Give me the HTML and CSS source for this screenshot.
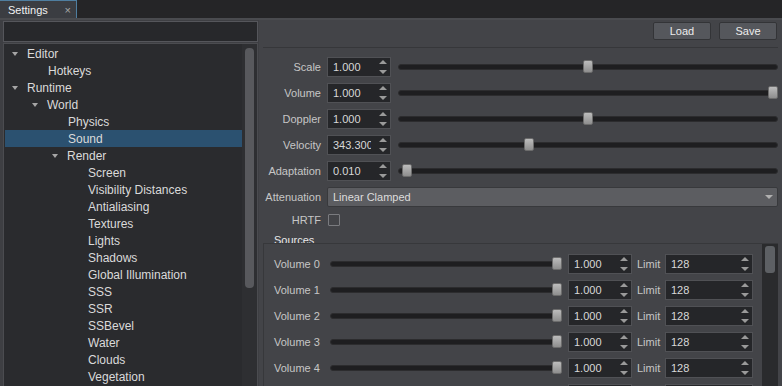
FILE: index.html
```html
<!DOCTYPE html>
<html lang="en">
<head>
    <meta charset="UTF-8">
    <title>Settings</title>
    <link rel="stylesheet" href="styles.css">
</head>
<body>
    <div class="tabbar">
        <div class="tab"><span>Settings</span><span class="tab-close">×</span></div>
    </div>

    <div class="main">
        <div class="left">
            <div class="search"></div>
            <div class="tree">
                <div class="tree-items">
                    <div class="item lvl0"><span class="arrow"></span>Editor</div>
                    <div class="item lvl1 leaf">Hotkeys</div>
                    <div class="item lvl0"><span class="arrow"></span>Runtime</div>
                    <div class="item lvl1"><span class="arrow"></span>World</div>
                    <div class="item lvl2 leaf">Physics</div>
                    <div class="item lvl2 leaf selected">Sound</div>
                    <div class="item lvl2"><span class="arrow"></span>Render</div>
                    <div class="item lvl3 leaf">Screen</div>
                    <div class="item lvl3 leaf">Visibility Distances</div>
                    <div class="item lvl3 leaf">Antialiasing</div>
                    <div class="item lvl3 leaf">Textures</div>
                    <div class="item lvl3 leaf">Lights</div>
                    <div class="item lvl3 leaf">Shadows</div>
                    <div class="item lvl3 leaf">Global Illumination</div>
                    <div class="item lvl3 leaf">SSS</div>
                    <div class="item lvl3 leaf">SSR</div>
                    <div class="item lvl3 leaf">SSBevel</div>
                    <div class="item lvl3 leaf">Water</div>
                    <div class="item lvl3 leaf">Clouds</div>
                    <div class="item lvl3 leaf">Vegetation</div>
                </div>
                <div class="tree-scroll"><div class="tree-thumb"></div></div>
            </div>
        </div>

        <div class="right">
            <div class="toolbar">
                <button class="btn">Load</button>
                <button class="btn">Save</button>
            </div>

            <div class="form">
                <label>Scale</label>
                <div class="field">
                    <div class="spin"><span class="spin-value">1.000</span><svg class="spin-arrows" viewBox="0 0 8 14"><polygon points="0,4 4,0 8,4"/><polygon points="0,10 8,10 4,14"/></svg></div>
                    <div class="slider"><div class="groove"></div><div class="handle" style="left: calc((100% - 10px) * 0.5)"></div></div>
                </div>

                <label>Volume</label>
                <div class="field">
                    <div class="spin"><span class="spin-value">1.000</span><svg class="spin-arrows" viewBox="0 0 8 14"><polygon points="0,4 4,0 8,4"/><polygon points="0,10 8,10 4,14"/></svg></div>
                    <div class="slider"><div class="groove"></div><div class="handle" style="left: calc((100% - 10px) * 1)"></div></div>
                </div>

                <label>Doppler</label>
                <div class="field">
                    <div class="spin"><span class="spin-value">1.000</span><svg class="spin-arrows" viewBox="0 0 8 14"><polygon points="0,4 4,0 8,4"/><polygon points="0,10 8,10 4,14"/></svg></div>
                    <div class="slider"><div class="groove"></div><div class="handle" style="left: calc((100% - 10px) * 0.5)"></div></div>
                </div>

                <label>Velocity</label>
                <div class="field">
                    <div class="spin"><span class="spin-value">343.300</span><svg class="spin-arrows" viewBox="0 0 8 14"><polygon points="0,4 4,0 8,4"/><polygon points="0,10 8,10 4,14"/></svg></div>
                    <div class="slider"><div class="groove"></div><div class="handle" style="left: calc((100% - 10px) * 0.34)"></div></div>
                </div>

                <label>Adaptation</label>
                <div class="field">
                    <div class="spin"><span class="spin-value">0.010</span><svg class="spin-arrows" viewBox="0 0 8 14"><polygon points="0,4 4,0 8,4"/><polygon points="0,10 8,10 4,14"/></svg></div>
                    <div class="slider"><div class="groove"></div><div class="handle" style="left: calc((100% - 10px) * 0.01)"></div></div>
                </div>

                <label>Attenuation</label>
                <div class="combo">
                    <span>Linear Clamped</span>
                    <svg class="combo-arrow" viewBox="0 0 8 4"><polygon points="0,0 8,0 4,4"/></svg>
                </div>

                <label>HRTF</label>
                <div class="field-check"><div class="check"></div></div>
            </div>

            <div class="group-title">Sources</div>
            <div class="group">
                <div class="sources">
                    <div class="source-row">
                        <label>Volume 0</label>
                        <div class="slider"><div class="groove"></div><div class="handle" style="left: calc((100% - 10px) * 1)"></div></div>
                        <div class="spin"><span class="spin-value">1.000</span><svg class="spin-arrows" viewBox="0 0 8 14"><polygon points="0,4 4,0 8,4"/><polygon points="0,10 8,10 4,14"/></svg></div>
                        <span class="limit">Limit</span>
                        <div class="spin spin-wide"><span class="spin-value">128</span><svg class="spin-arrows" viewBox="0 0 8 14"><polygon points="0,4 4,0 8,4"/><polygon points="0,10 8,10 4,14"/></svg></div>
                    </div>
                    <div class="source-row">
                        <label>Volume 1</label>
                        <div class="slider"><div class="groove"></div><div class="handle" style="left: calc((100% - 10px) * 1)"></div></div>
                        <div class="spin"><span class="spin-value">1.000</span><svg class="spin-arrows" viewBox="0 0 8 14"><polygon points="0,4 4,0 8,4"/><polygon points="0,10 8,10 4,14"/></svg></div>
                        <span class="limit">Limit</span>
                        <div class="spin spin-wide"><span class="spin-value">128</span><svg class="spin-arrows" viewBox="0 0 8 14"><polygon points="0,4 4,0 8,4"/><polygon points="0,10 8,10 4,14"/></svg></div>
                    </div>
                    <div class="source-row">
                        <label>Volume 2</label>
                        <div class="slider"><div class="groove"></div><div class="handle" style="left: calc((100% - 10px) * 1)"></div></div>
                        <div class="spin"><span class="spin-value">1.000</span><svg class="spin-arrows" viewBox="0 0 8 14"><polygon points="0,4 4,0 8,4"/><polygon points="0,10 8,10 4,14"/></svg></div>
                        <span class="limit">Limit</span>
                        <div class="spin spin-wide"><span class="spin-value">128</span><svg class="spin-arrows" viewBox="0 0 8 14"><polygon points="0,4 4,0 8,4"/><polygon points="0,10 8,10 4,14"/></svg></div>
                    </div>
                    <div class="source-row">
                        <label>Volume 3</label>
                        <div class="slider"><div class="groove"></div><div class="handle" style="left: calc((100% - 10px) * 1)"></div></div>
                        <div class="spin"><span class="spin-value">1.000</span><svg class="spin-arrows" viewBox="0 0 8 14"><polygon points="0,4 4,0 8,4"/><polygon points="0,10 8,10 4,14"/></svg></div>
                        <span class="limit">Limit</span>
                        <div class="spin spin-wide"><span class="spin-value">128</span><svg class="spin-arrows" viewBox="0 0 8 14"><polygon points="0,4 4,0 8,4"/><polygon points="0,10 8,10 4,14"/></svg></div>
                    </div>
                    <div class="source-row">
                        <label>Volume 4</label>
                        <div class="slider"><div class="groove"></div><div class="handle" style="left: calc((100% - 10px) * 1)"></div></div>
                        <div class="spin"><span class="spin-value">1.000</span><svg class="spin-arrows" viewBox="0 0 8 14"><polygon points="0,4 4,0 8,4"/><polygon points="0,10 8,10 4,14"/></svg></div>
                        <span class="limit">Limit</span>
                        <div class="spin spin-wide"><span class="spin-value">128</span><svg class="spin-arrows" viewBox="0 0 8 14"><polygon points="0,4 4,0 8,4"/><polygon points="0,10 8,10 4,14"/></svg></div>
                    </div>
                    <div class="source-row">
                        <label>Volume 5</label>
                        <div class="slider"><div class="groove"></div><div class="handle" style="left: calc((100% - 10px) * 1)"></div></div>
                        <div class="spin"><span class="spin-value">1.000</span><svg class="spin-arrows" viewBox="0 0 8 14"><polygon points="0,4 4,0 8,4"/><polygon points="0,10 8,10 4,14"/></svg></div>
                        <span class="limit">Limit</span>
                        <div class="spin spin-wide"><span class="spin-value">128</span><svg class="spin-arrows" viewBox="0 0 8 14"><polygon points="0,4 4,0 8,4"/><polygon points="0,10 8,10 4,14"/></svg></div>
                    </div>
                </div>
                <div class="group-scroll"><div class="group-thumb"></div></div>
            </div>
        </div>
    </div>
</body>
</html>
```

FILE: styles.css
```css
body {
    margin: 0;
    width: 782px;
    height: 386px;
    overflow: hidden;
    background: #434448;
    font-family: "Liberation Sans", Arial, sans-serif;
    font-size: 12px;
    color: #d6d6d6;
}

/* tab strip */
.tabbar {
    height: 18px;
    background: #252527;
    border-bottom: 2px solid #4a4b4f;
    display: flex;
}
.tab {
    width: 77px;
    height: 18px;
    box-sizing: border-box;
    display: flex;
    align-items: center;
    padding: 0 5px 0 8px;
    background: #3b3d42;
    border-top: 1px solid #4f7ea0;
    border-right: 1px solid #4f7ea0;
    color: #f2f2f2;
    font-size: 11px;
}
.tab-close {
    margin-left: auto;
    color: #a8a8a8;
    font-size: 11px;
}

.main {
    display: flex;
    height: 366px;
}

/* left: filter + tree */
.left {
    width: 259px;
    flex-shrink: 0;
    box-sizing: border-box;
    padding: 1px 1px 0 3px;
    background: #3e3f43;
    display: flex;
    flex-direction: column;
}
.search {
    height: 21px;
    box-sizing: border-box;
    border: 1px solid #55565b;
    background: #27282b;
}
.tree {
    flex: 1;
    margin-top: 1px;
    border: 1px solid #4b4c50;
    border-bottom: none;
    background: #2a2b2e;
    display: flex;
    overflow: hidden;
}
.tree-items {
    flex: 1;
    padding: 1px 0 0 1px;
}
.item {
    height: 17px;
    display: flex;
    align-items: center;
    white-space: nowrap;
    color: #dadada;
}
.item.selected {
    background: #2b5170;
}
.arrow {
    width: 0;
    height: 0;
    border-left: 3.5px solid transparent;
    border-right: 3.5px solid transparent;
    border-top: 4px solid #a6a6a6;
    margin-right: 9px;
}
.lvl0 { padding-left: 7px; }
.lvl1 { padding-left: 27px; }
.lvl2 { padding-left: 47px; }
.lvl3 { padding-left: 67px; }
.lvl0.leaf { padding-left: 23px; }
.lvl1.leaf { padding-left: 43px; }
.lvl2.leaf { padding-left: 63px; }
.lvl3.leaf { padding-left: 83px; }

.tree-scroll {
    width: 15px;
    box-sizing: border-box;
    padding: 4px 3px 0;
    background: #2e2f32;
}
.tree-thumb {
    height: 240px;
    background: #58595d;
    border-radius: 4px;
}

/* right: settings page */
.right {
    flex: 1;
    display: flex;
    flex-direction: column;
    padding: 0 4px;
    overflow: hidden;
}
.toolbar {
    height: 28px;
    box-sizing: border-box;
    border-bottom: 1px solid #36373a;
    display: flex;
    justify-content: flex-end;
    align-items: flex-start;
    gap: 8px;
    padding: 2px 1px 0 0;
}
.btn {
    width: 58px;
    height: 18px;
    padding: 0;
    border: 1px solid #333437;
    border-radius: 2px;
    background: #55575c;
    color: #ececec;
    font-family: "Liberation Sans", Arial, sans-serif;
    font-size: 11px;
}

.form {
    display: grid;
    grid-template-columns: 58px 1fr;
    column-gap: 6px;
    row-gap: 6px;
    align-items: center;
    padding-top: 9px;
    font-size: 11px;
}
.form label {
    text-align: right;
    color: #c6c6c6;
    white-space: nowrap;
}
.field {
    height: 20px;
    display: flex;
    align-items: center;
    gap: 7px;
}

.spin {
    width: 64px;
    height: 20px;
    flex-shrink: 0;
    box-sizing: border-box;
    border: 1px solid #505155;
    background: #252629;
    display: flex;
    align-items: center;
    padding-left: 5px;
    font-size: 11px;
}
.spin-wide {
    width: 88px;
}
.spin-value {
    flex: 1;
    overflow: hidden;
    white-space: nowrap;
    color: #d8d8d8;
}
.spin-arrows {
    width: 8px;
    height: 14px;
    margin: 0 3px 0 8px;
    fill: #9a9a9a;
}

.slider {
    flex: 1;
    position: relative;
    height: 14px;
    display: flex;
    align-items: center;
}
.groove {
    flex: 1;
    height: 6px;
    box-sizing: border-box;
    background: #1e1e20;
    border: 1px solid #2c2c2e;
    border-radius: 3px;
}
.handle {
    position: absolute;
    top: 0;
    width: 10px;
    height: 13px;
    box-sizing: border-box;
    border: 1px solid #6c6c6c;
    border-radius: 2px;
    background: linear-gradient(#bcbcbc, #8e8e8e);
}

.combo {
    height: 20px;
    box-sizing: border-box;
    border: 1px solid #38393c;
    border-radius: 2px;
    background: #5c5d61;
    display: flex;
    align-items: center;
    justify-content: space-between;
    padding: 0 4px 0 5px;
    color: #dcdcdc;
}
.combo-arrow {
    width: 8px;
    height: 4px;
    fill: #b0b0b0;
}

.field-check {
    height: 14px;
    display: flex;
    align-items: center;
}
.check {
    width: 12px;
    height: 12px;
    box-sizing: border-box;
    margin-left: 1px;
    border: 1px solid #7a7b7f;
    border-radius: 1px;
}

/* sources group */
.group-title {
    height: 10px;
    line-height: 14px;
    margin-top: 6px;
    padding-left: 11px;
    font-size: 11px;
    color: #e8e8e8;
}
.group {
    flex: 1;
    display: flex;
    border-top: 1px solid #37383b;
    border-left: 1px solid #37383b;
    overflow: hidden;
}
.sources {
    flex: 1;
    display: flex;
    flex-direction: column;
    gap: 6px;
    padding: 10px 9px 0 10px;
}
.source-row {
    height: 20px;
    flex-shrink: 0;
    display: flex;
    align-items: center;
    gap: 6px;
    font-size: 11px;
}
.source-row label {
    width: 50px;
    color: #c6c6c6;
}
.limit {
    width: 22px;
    margin-left: -1px;
    color: #c6c6c6;
}
.group-scroll {
    width: 16px;
    box-sizing: border-box;
    padding: 2px 3px 0;
    background: #2a2b2d;
}
.group-thumb {
    height: 27px;
    background: #5d6064;
    border-radius: 3px;
}
```
